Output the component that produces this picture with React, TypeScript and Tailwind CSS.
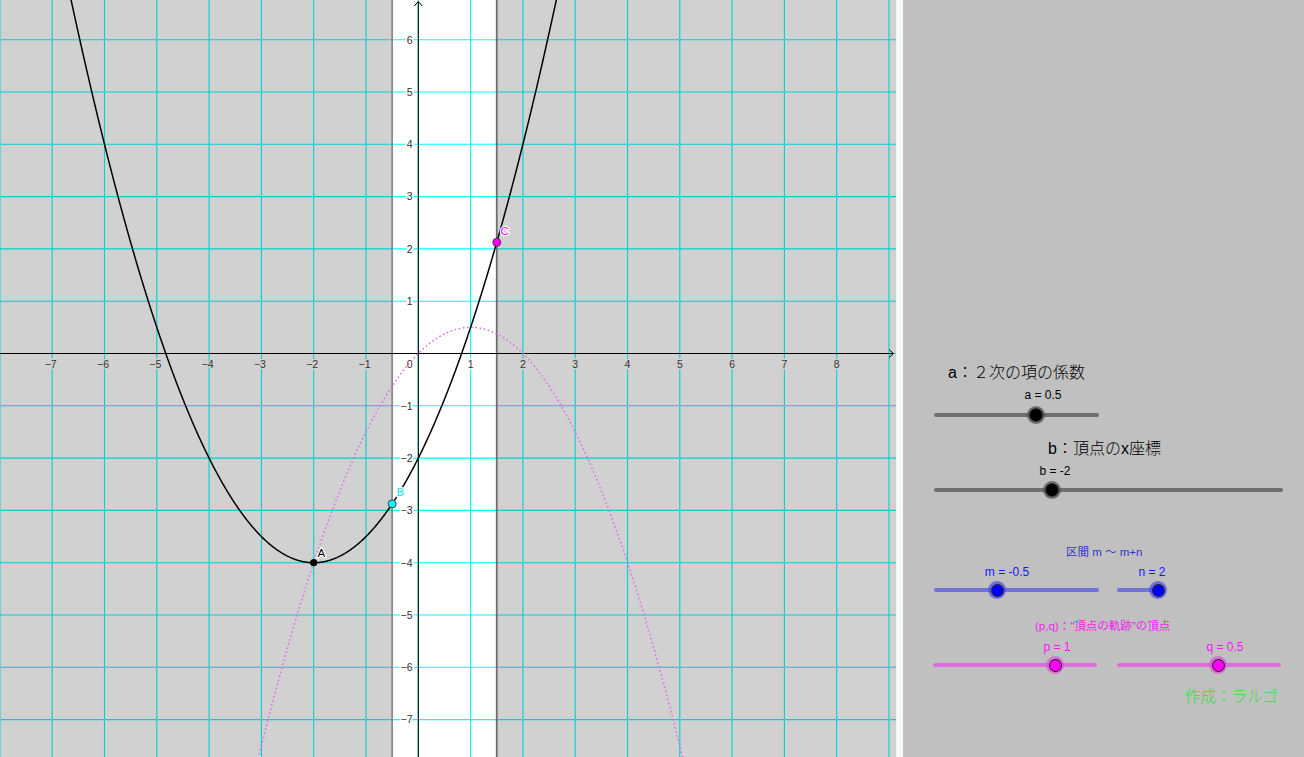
const OX = 418.3;
const OY = 353.5;
const U = 52.3;
const W = 896;
const H = 757;

const sx = (x: number) => OX + x * U;
const sy = (y: number) => OY - y * U;

const FONT = '"Liberation Sans", Arial, sans-serif';

function curve(f: (x: number) => number) {
  const pts: string[] = [];
  for (let x = -8.2; x <= 9.3; x += 0.01) {
    const y = sy(f(x));
    if (y < -40 || y > H + 40) continue;
    pts.push(`${sx(x).toFixed(2)},${y.toFixed(2)}`);
  }
  return pts.join(" ");
}

const fmt = (n: number) => (n < 0 ? `\u2212${-n}` : `${n}`);

function Graph() {
  const xs = Array.from({ length: 18 }, (_, i) => i - 8);
  const ys = Array.from({ length: 16 }, (_, i) => i - 8);
  const left = sx(-0.5);
  const right = sx(1.5);
  const A = { x: sx(-2), y: sy(-4) };
  const B = { x: sx(-0.5), y: sy(-2.875) };
  const C = { x: sx(1.5), y: sy(2.125) };

  return (
    <svg width={W} height={H} className="block shrink-0">
      <rect width={W} height={H} fill="#ffffff" />
      {xs.map((k) => (
        <line key={`gx${k}`} x1={sx(k)} x2={sx(k)} y1={0} y2={H} stroke="#00ffff" strokeWidth={1.1} />
      ))}
      {ys.map((k) => (
        <line key={`gy${k}`} x1={0} x2={W} y1={sy(k)} y2={sy(k)} stroke="#00ffff" strokeWidth={1.1} />
      ))}

      {/* shaded region outside the interval m ~ m+n */}
      <rect x={0} y={0} width={left} height={H} fill="#000" fillOpacity={0.18} />
      <rect x={right} y={0} width={W - right} height={H} fill="#000" fillOpacity={0.18} />
      <line x1={left} x2={left} y1={0} y2={H} stroke="#8a8a8a" strokeWidth={1.8} />
      <line x1={right} x2={right} y1={0} y2={H} stroke="#6e6e6e" strokeWidth={1.8} />

      {/* axes */}
      <line x1={0} x2={893} y1={OY} y2={OY} stroke="#000" strokeWidth={1.1} />
      <polyline points={`889,${OY - 4} 893.5,${OY} 889,${OY + 4}`} fill="none" stroke="#000" strokeWidth={1} />
      <line x1={OX} x2={OX} y1={1.5} y2={H} stroke="#000" strokeWidth={1.1} />
      <polyline points={`${OX - 4},6 ${OX},1.5 ${OX + 4},6`} fill="none" stroke="#000" strokeWidth={1} />

      <g fontFamily={FONT} fontSize={10.5} fill="#333">
        {xs
          .filter((k) => k !== 0 && k >= -7 && k <= 8)
          .map((k) => (
            <text
              key={`lx${k}`}
              x={sx(k) + (k < 0 ? -1.5 : 0)}
              y={367.5}
              textAnchor="middle"
              paintOrder="stroke"
              stroke={k < -0.5 || k > 1.5 ? "#d1d1d1" : "#ffffff"}
              strokeWidth={3}
            >
              {fmt(k)}
            </text>
          ))}
        <text x={412.5} y={367.5} textAnchor="end" paintOrder="stroke" stroke="#fff" strokeWidth={3}>
          0
        </text>
        {ys
          .filter((k) => k !== 0 && k >= -7 && k <= 6)
          .map((k) => (
            <text
              key={`ly${k}`}
              x={412.5}
              y={sy(k) + 3.8}
              textAnchor="end"
              paintOrder="stroke"
              stroke="#ffffff"
              strokeWidth={3}
            >
              {fmt(k)}
            </text>
          ))}
      </g>

      {/* locus of the vertex */}
      <polyline
        points={curve((x) => -0.5 * (x - 1) * (x - 1) + 0.5)}
        fill="none"
        stroke="#dc64e6"
        strokeWidth={1.4}
        strokeDasharray="1.6 2.6"
      />
      {/* y = a(x - b)^2 + ... */}
      <polyline
        points={curve((x) => 0.5 * (x + 2) * (x + 2) - 4)}
        fill="none"
        stroke="#000"
        strokeWidth={1.5}
      />

      <circle cx={A.x} cy={A.y} r={3.6} fill="#000" />
      <circle cx={B.x} cy={B.y} r={4} fill="#00ffff" stroke="#333" strokeWidth={0.9} />
      <circle cx={C.x} cy={C.y} r={4} fill="#ff00ff" stroke="#333" strokeWidth={0.9} />

      <g fontFamily={FONT} fontSize={11.5} paintOrder="stroke" strokeWidth={2.5} stroke="#ffffff">
        <text x={317.5} y={557} fill="#000">A</text>
        <text x={396.5} y={496} fill="#00e6e6">B</text>
        <text x={500.5} y={235} fill="#ff00ff">C</text>
      </g>
    </svg>
  );
}

type SliderProps = {
  width: number;
  pos: number;
  className: string;
  trackClass: string;
  haloClass: string;
  dotClass: string;
};

function Slider({ width, pos, className, trackClass, haloClass, dotClass }: SliderProps) {
  return (
    <div className={`relative h-[18px] ${className}`} style={{ width }}>
      <div className={`absolute left-0 right-0 top-[7px] h-[4px] rounded-full ${trackClass}`} />
      <div
        className={`absolute top-0 flex h-[18px] w-[18px] items-center justify-center rounded-full ${haloClass}`}
        style={{ left: pos * width - 9 }}
      >
        <div className={`rounded-full ${dotClass}`} />
      </div>
    </div>
  );
}

const CJK = "font-['Liberation_Sans','Noto_Sans_CJK_JP',sans-serif]";

function Panel() {
  return (
    <div className={`flex flex-1 flex-col bg-[#c0c0c0] text-black ${CJK}`}>
      <div className="ml-[45px] mt-[363px] h-[20px] whitespace-nowrap text-[16px] font-light leading-[20px]">
        a：２次の項の係数
      </div>
      <div className="ml-[100px] mt-[5px] h-[14px] w-[80px] text-center text-[12px] leading-[14px]">a = 0.5</div>
      <Slider
        width={165}
        pos={102 / 165}
        className="ml-[31px] mt-[4px]"
        trackClass="bg-[#6e6e6e]"
        haloClass="bg-[#4a4a4a]/70"
        dotClass="h-[12px] w-[12px] bg-black ring-1 ring-[#333]"
      />

      <div className="ml-[145px] mt-[15px] h-[20px] whitespace-nowrap text-[16px] font-light leading-[20px]">
        b：頂点のx座標
      </div>
      <div className="ml-[112px] mt-[5px] h-[14px] w-[80px] text-center text-[12px] leading-[14px]">b = -2</div>
      <Slider
        width={349}
        pos={118 / 349}
        className="ml-[31px] mt-[3px]"
        trackClass="bg-[#6e6e6e]"
        haloClass="bg-[#4a4a4a]/70"
        dotClass="h-[12px] w-[12px] bg-black ring-1 ring-[#333]"
      />

      <div className="ml-[163px] mt-[46px] h-[14px] whitespace-nowrap text-[11.5px] leading-[14px] text-[#3434d0]">
        区間 m 〜 m+n
      </div>
      <div className="mt-[6px] flex h-[14px] text-[12px] leading-[14px] text-[#1414ff]">
        <div className="ml-[64px] w-[80px] text-center">m = -0.5</div>
        <div className="ml-[65px] w-[80px] text-center">n = 2</div>
      </div>
      <div className="mt-[2px] flex">
        <Slider
          width={165}
          pos={63 / 165}
          className="ml-[31px]"
          trackClass="bg-[#7272dc]"
          haloClass="bg-[#4848e8]/70"
          dotClass="h-[11px] w-[11px] bg-[#0000ff] ring-1 ring-[#222]"
        />
        <Slider
          width={44}
          pos={41 / 44}
          className="ml-[18px]"
          trackClass="bg-[#7272dc]"
          haloClass="bg-[#4848e8]/70"
          dotClass="h-[11px] w-[11px] bg-[#0000ff] ring-1 ring-[#222]"
        />
      </div>

      <div className="ml-[132px] mt-[20px] h-[14px] whitespace-nowrap text-[11.5px] leading-[14px] text-[#f020f0]">
        (p,q)："頂点の軌跡"の頂点
      </div>
      <div className="mt-[7px] flex h-[14px] text-[12px] leading-[14px] text-[#ff10ff]">
        <div className="ml-[114px] w-[80px] text-center">p = 1</div>
        <div className="ml-[88px] w-[80px] text-center">q = 0.5</div>
      </div>
      <div className="mt-[2px] flex">
        <Slider
          width={164}
          pos={122 / 164}
          className="ml-[30px]"
          trackClass="bg-[#dc6cdc]"
          haloClass="bg-[#e050e0]/70"
          dotClass="h-[11px] w-[11px] bg-[#ff00ff] ring-1 ring-[#222]"
        />
        <Slider
          width={164}
          pos={101 / 164}
          className="ml-[20px]"
          trackClass="bg-[#dc6cdc]"
          haloClass="bg-[#e050e0]/70"
          dotClass="h-[11px] w-[11px] bg-[#ff00ff] ring-1 ring-[#222]"
        />
      </div>

      <div className="ml-[282px] mt-[13px] h-[20px] whitespace-nowrap text-[15.5px] font-light leading-[20px] text-[#38dc38]">
        作成：ラルゴ
      </div>
    </div>
  );
}

export default function App() {
  return (
    <div className="flex h-[757px] w-[1304px] overflow-hidden bg-[#c0c0c0]">
      <Graph />
      <div className="w-[7px] shrink-0 bg-[#f7f7f7]" />
      <Panel />
    </div>
  );
}
